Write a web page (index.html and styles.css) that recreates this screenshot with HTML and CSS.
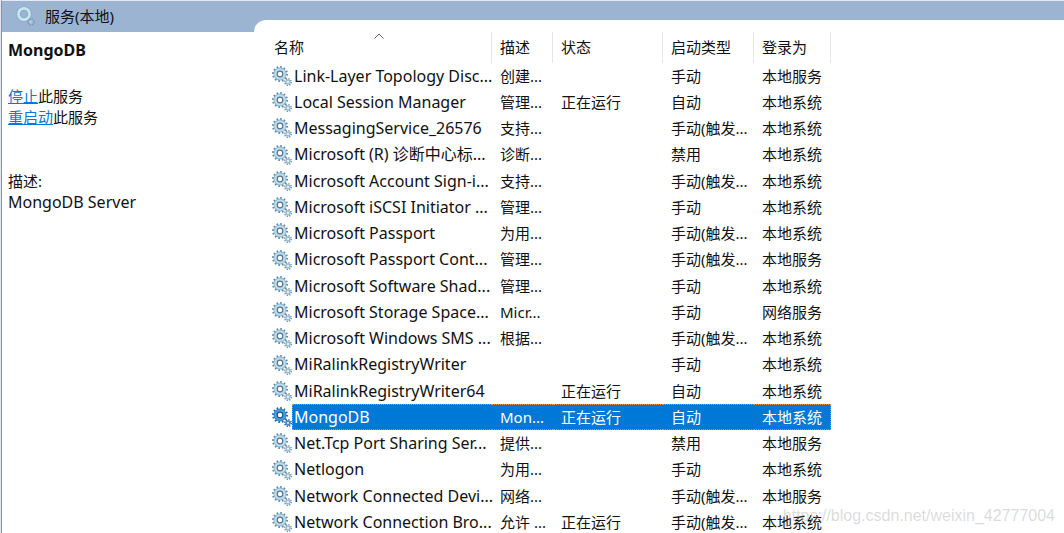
FILE: index.html
```html
<!DOCTYPE html>
<html lang="zh-CN">
<head>
  <meta charset="UTF-8">
  <meta name="viewport" content="width=device-width, initial-scale=1.0">
  <title>服务</title>
  <link rel="stylesheet" href="styles.css">
</head>
<body>
  <svg class="sprite" aria-hidden="true">
    <symbol id="gear" viewBox="0 0 20 20">
      <circle cx="8" cy="8" r="7" fill="none" stroke="#6288a5" stroke-width="2" stroke-dasharray="1.600 2.065"/>
      <circle cx="8" cy="8" r="6.400" fill="#79a6c2"/>
      <circle cx="8" cy="8" r="5.800" fill="#b9dff0"/>
      <circle cx="8" cy="8" r="2.800" fill="#fff" stroke="#5d7288" stroke-width="1.200"/>
      <circle cx="16" cy="16" r="3.200" fill="none" stroke="#6d8ca5" stroke-width="1.600" stroke-dasharray="1.200 1.313"/>
      <circle cx="16" cy="16" r="2.700" fill="#9dc0d6"/>
      <circle cx="16" cy="16" r="1" fill="#fff"/>
    </symbol>
    <symbol id="gear-selected" viewBox="0 0 20 20">
      <circle cx="8" cy="8" r="7" fill="none" stroke="#1c68ad" stroke-width="2" stroke-dasharray="1.600 2.065"/>
      <circle cx="8" cy="8" r="6.400" fill="#2173bb"/>
      <circle cx="8" cy="8" r="5.800" fill="#48a0df"/>
      <circle cx="8" cy="8" r="2.800" fill="#fff" stroke="#1c568e" stroke-width="1.200"/>
      <circle cx="16" cy="16" r="3.200" fill="none" stroke="#1c5c98" stroke-width="1.600" stroke-dasharray="1.200 1.313"/>
      <circle cx="16" cy="16" r="2.700" fill="#3c8dca"/>
      <circle cx="16" cy="16" r="1" fill="#fff"/>
    </symbol>
  </svg>

  <div class="window">
    <header class="titlebar">
      <svg class="titlebar-icon" viewBox="0 0 20 20" aria-hidden="true">
        <circle cx="8" cy="7" r="5.600" fill="none" stroke="#7fa9c4" stroke-width="4"/>
        <circle cx="8" cy="7" r="5.600" fill="none" stroke="#c9e6f2" stroke-width="2.600"/>
        <circle cx="15" cy="15" r="2.800" fill="none" stroke="#7f9cb8" stroke-width="2.400" stroke-dasharray="1.200 1"/>
        <circle cx="15" cy="15" r="1.800" fill="#b4cde0"/>
      </svg>
      <h1 class="titlebar-text">服务(本地)</h1>
    </header>

    <main class="content">
      <aside class="details">
        <h2 class="details-name">MongoDB</h2>
        <div class="details-actions">
          <p><a href="#stop">停止</a>此服务</p>
          <p><a href="#restart">重启动</a>此服务</p>
        </div>
        <p>描述:</p>
        <p class="details-desc">MongoDB Server</p>
      </aside>

      <section class="list">
        <table class="services">
          <colgroup>
            <col class="col-icon">
            <col class="col-name">
            <col class="col-desc">
            <col class="col-status">
            <col class="col-start">
            <col class="col-logon">
          </colgroup>
          <thead>
            <tr>
              <th colspan="2" class="sorted">名称
                <svg class="sort-arrow" viewBox="0 0 10 6" aria-hidden="true"><path d="M.5 5.500 5 1l4.500 4.500" fill="none" stroke="#666"/></svg>
              </th>
              <th>描述</th>
              <th>状态</th>
              <th>启动类型</th>
              <th>登录为</th>
            </tr>
          </thead>
          <tbody>
            <tr><td><svg class="gear"><use href="#gear"/></svg></td><td>Link-Layer Topology Disc...</td><td>创建...</td><td></td><td>手动</td><td>本地服务</td></tr>
            <tr><td><svg class="gear"><use href="#gear"/></svg></td><td>Local Session Manager</td><td>管理...</td><td>正在运行</td><td>自动</td><td>本地系统</td></tr>
            <tr><td><svg class="gear"><use href="#gear"/></svg></td><td>MessagingService_26576</td><td>支持...</td><td></td><td>手动(触发...</td><td>本地系统</td></tr>
            <tr><td><svg class="gear"><use href="#gear"/></svg></td><td>Microsoft (R) 诊断中心标...</td><td>诊断...</td><td></td><td>禁用</td><td>本地系统</td></tr>
            <tr><td><svg class="gear"><use href="#gear"/></svg></td><td>Microsoft Account Sign-i...</td><td>支持...</td><td></td><td>手动(触发...</td><td>本地系统</td></tr>
            <tr><td><svg class="gear"><use href="#gear"/></svg></td><td>Microsoft iSCSI Initiator ...</td><td>管理...</td><td></td><td>手动</td><td>本地系统</td></tr>
            <tr><td><svg class="gear"><use href="#gear"/></svg></td><td>Microsoft Passport</td><td>为用...</td><td></td><td>手动(触发...</td><td>本地系统</td></tr>
            <tr><td><svg class="gear"><use href="#gear"/></svg></td><td>Microsoft Passport Cont...</td><td>管理...</td><td></td><td>手动(触发...</td><td>本地服务</td></tr>
            <tr><td><svg class="gear"><use href="#gear"/></svg></td><td>Microsoft Software Shad...</td><td>管理...</td><td></td><td>手动</td><td>本地系统</td></tr>
            <tr><td><svg class="gear"><use href="#gear"/></svg></td><td>Microsoft Storage Space...</td><td>Micr...</td><td></td><td>手动</td><td>网络服务</td></tr>
            <tr><td><svg class="gear"><use href="#gear"/></svg></td><td>Microsoft Windows SMS ...</td><td>根据...</td><td></td><td>手动(触发...</td><td>本地系统</td></tr>
            <tr><td><svg class="gear"><use href="#gear"/></svg></td><td>MiRalinkRegistryWriter</td><td></td><td></td><td>手动</td><td>本地系统</td></tr>
            <tr><td><svg class="gear"><use href="#gear"/></svg></td><td>MiRalinkRegistryWriter64</td><td></td><td>正在运行</td><td>自动</td><td>本地系统</td></tr>
            <tr class="selected"><td><svg class="gear"><use href="#gear-selected"/></svg></td><td>MongoDB</td><td>Mon...</td><td>正在运行</td><td>自动</td><td>本地系统</td></tr>
            <tr><td><svg class="gear"><use href="#gear"/></svg></td><td>Net.Tcp Port Sharing Ser...</td><td>提供...</td><td></td><td>禁用</td><td>本地服务</td></tr>
            <tr><td><svg class="gear"><use href="#gear"/></svg></td><td>Netlogon</td><td>为用...</td><td></td><td>手动</td><td>本地系统</td></tr>
            <tr><td><svg class="gear"><use href="#gear"/></svg></td><td>Network Connected Devi...</td><td>网络...</td><td></td><td>手动(触发...</td><td>本地服务</td></tr>
            <tr><td><svg class="gear"><use href="#gear"/></svg></td><td>Network Connection Bro...</td><td>允许 ...</td><td>正在运行</td><td>手动(触发...</td><td>本地系统</td></tr>
          </tbody>
        </table>
      </section>
    </main>
  </div>
  <div class="watermark">https://blog.csdn.net/weixin_42777004</div>
</body>
</html>
```
FILE: styles.css
```css
*, *::before, *::after {
  margin: 0;
  padding: 0;
  box-sizing: border-box;
}
body {
  height: 100vh;
  overflow: hidden;
  position: relative;
  background: #dfe3f4;
  color: #111111;
  font: 15px/21px "Noto Sans", "Noto Sans CJK SC", sans-serif;
}
.sprite {
  position: absolute;
  width: 0;
  height: 0;
}
.window {
  height: 100vh;
  margin-left: 1px;
  border-left: 1px solid #8e949c;
  border-top: 1px solid #e4e8f4;
  display: flex;
  flex-direction: column;
  background: #9ab4d1;
}
.titlebar {
  height: 31px;
  flex: none;
  display: flex;
  align-items: center;
  gap: 9px;
  padding-left: 14px;
}
.titlebar-icon {
  width: 20px;
  height: 20px;
}
.titlebar-text {
  font-size: 15px;
  font-weight: 400;
}
.content {
  flex: 1;
  display: flex;
  align-items: stretch;
}
.details {
  width: 252px;
  flex: none;
  padding: 8px 6px;
  background: #ffffff;
}
.details-name {
  font-size: 16px;
  font-weight: 700;
}
.details-actions {
  margin: 25px 0 43px;
}
.details-desc {
  font-size: 16px;
}
.details a {
  color: #0078d7;
}
.list {
  flex: 1;
  margin-top: -12px;
  padding: 12px 0 0 12px;
  border-top-left-radius: 12px;
  background: #ffffff;
}
.services {
  table-layout: fixed;
  width: 565px;
  border-collapse: separate;
  border-spacing: 0;
  white-space: nowrap;
}
.col-icon {
  width: 26px;
}
.col-name {
  width: 200px;
}
.col-desc {
  width: 61px;
}
.col-status {
  width: 110px;
}
.col-start {
  width: 91px;
}
.col-logon {
  width: 77px;
}
.services th {
  height: 31px;
  padding-left: 8px;
  border-right: 1px solid #e5e5e5;
  font-weight: 400;
  text-align: left;
}
.sorted {
  position: relative;
}
.sort-arrow {
  position: absolute;
  top: 1px;
  left: 48%;
  width: 10px;
  height: 6px;
}
.services td {
  height: 26px;
  padding-left: 8px;
}
.services tr:nth-child(4n) td {
  height: 27px;
}
.services td:first-child {
  padding-left: 6px;
}
.services td:nth-child(2) {
  padding-left: 2px;
  font-size: 16px;
}
.gear {
  display: block;
  width: 20px;
  height: 20px;
}
.selected td:not(:first-child) {
  background: #0078d7;
  color: #ffffff;
  border: 0 dotted #e08a3c;
  border-width: 1px 0;
}
.services .selected td:nth-child(2) {
  padding-left: 1px;
  border-left-width: 1px;
}
.selected td:last-child {
  border-right-width: 1px;
}
.watermark {
  position: absolute;
  right: 9px;
  bottom: 7px;
  color: rgba(150, 150, 150, 0.35);
  font: 16px/20px "Liberation Sans", sans-serif;
}
```
